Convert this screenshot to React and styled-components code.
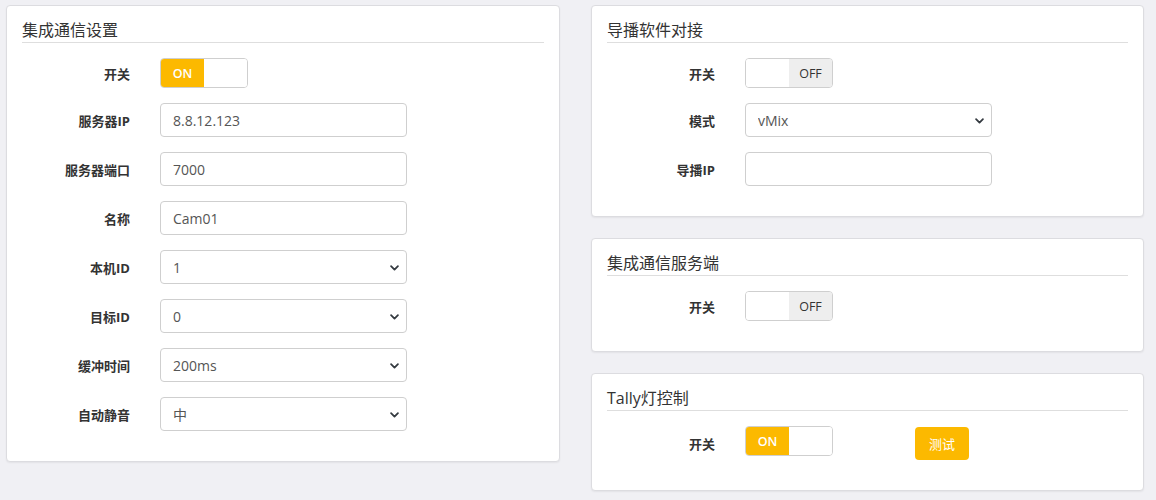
import styled, { createGlobalStyle } from "styled-components";

const GlobalStyle = createGlobalStyle`
  html, body {
    margin: 0;
    padding: 0;
    background: #f0f0f4;
    font-family: "Open Sans", "Noto Sans CJK SC", sans-serif;
    color: #333;
  }
  * { box-sizing: border-box; }
`;

const YELLOW = "#fcb900";

const chevron = `url("data:image/svg+xml,%3csvg xmlns='http://www.w3.org/2000/svg' viewBox='0 0 16 16'%3e%3cpath fill='none' stroke='%23343a40' stroke-linecap='round' stroke-linejoin='round' stroke-width='2.6' d='M3 6l5 5 5-5'/%3e%3c/svg%3e")`;

const Page = styled.div`
  display: grid;
  grid-template-columns: 554px 553px;
  column-gap: 31px;
  align-items: start;
  padding: 5px 6px;
  width: 1156px;
  height: 500px;
`;

const Column = styled.div`
  display: flex;
  flex-direction: column;
  gap: 21px;
`;

const Card = styled.section`
  background: #fff;
  border: 1px solid #dcdce0;
  border-radius: 4px;
  box-shadow: 0 1px 2px rgba(0, 0, 0, 0.06);
  padding: 13px 15px 30px;
`;

const Title = styled.h3`
  margin: 0 0 15px;
  font-size: 16px;
  font-weight: 400;
  line-height: 22px;
  padding-bottom: 1px;
  border-bottom: 1px solid #dedede;
  color: #333;
`;

const Rows = styled.div`
  display: flex;
  flex-direction: column;
  gap: 15px;
`;

const Row = styled.div`
  display: flex;
  align-items: ${(p) => (p.$top ? "flex-start" : "center")};
`;

const Label = styled.label`
  width: 108px;
  text-align: right;
  font-size: 13px;
  font-weight: 700;
  color: #333;
  margin-right: 30px;
  align-self: center;
`;

const TextInput = styled.input`
  width: 247px;
  height: 34px;
  border: 1px solid #cfcfcf;
  border-radius: 4px;
  padding: 0 12px;
  font-family: inherit;
  font-size: 14px;
  color: #555;
  outline: none;
`;

const Select = styled.select`
  width: 247px;
  height: 34px;
  border: 1px solid #cfcfcf;
  border-radius: 4px;
  padding: 0 12px;
  font-family: inherit;
  font-size: 14px;
  color: #555;
  background: #fff ${chevron} no-repeat right 6px center / 11px 11px;
  appearance: none;
  outline: none;
`;

const Switch = styled.div`
  display: flex;
  width: 88px;
  height: 30px;
  border: 1px solid #cfcfcf;
  border-radius: 4px;
  overflow: hidden;
`;

const Half = styled.span`
  flex: 1;
  display: flex;
  align-items: center;
  justify-content: center;
  font-size: 12.5px;
  background: ${(p) => (p.$on ? YELLOW : p.$off ? "#eeeeee" : "#fff")};
  color: ${(p) => (p.$on ? "#fff" : "#333")};
  font-weight: ${(p) => (p.$on ? 600 : 400)};
`;

const Button = styled.button`
  margin: 1px 0 0 82px;
  width: 54px;
  height: 33px;
  border: none;
  border-radius: 4px;
  background: ${YELLOW};
  color: #fff;
  font-family: inherit;
  font-size: 13px;
`;

const Toggle = ({ on }) =>
  on ? (
    <Switch>
      <Half $on>ON</Half>
      <Half />
    </Switch>
  ) : (
    <Switch>
      <Half />
      <Half $off>OFF</Half>
    </Switch>
  );

const Field = ({ label, top, children }) => (
  <Row $top={top}>
    <Label>{label}</Label>
    {children}
  </Row>
);

const App = () => (
  <>
    <GlobalStyle />
    <Page>
      <Column>
        <Card>
          <Title>集成通信设置</Title>
          <Rows>
            <Field label="开关">
              <Toggle on />
            </Field>
            <Field label="服务器IP">
              <TextInput defaultValue="8.8.12.123" />
            </Field>
            <Field label="服务器端口">
              <TextInput defaultValue="7000" />
            </Field>
            <Field label="名称">
              <TextInput defaultValue="Cam01" />
            </Field>
            <Field label="本机ID">
              <Select defaultValue="1">
                <option>1</option>
              </Select>
            </Field>
            <Field label="目标ID">
              <Select defaultValue="0">
                <option>0</option>
              </Select>
            </Field>
            <Field label="缓冲时间">
              <Select defaultValue="200ms">
                <option>200ms</option>
              </Select>
            </Field>
            <Field label="自动静音">
              <Select defaultValue="中">
                <option>中</option>
              </Select>
            </Field>
          </Rows>
        </Card>
      </Column>
      <Column>
        <Card>
          <Title>导播软件对接</Title>
          <Rows>
            <Field label="开关">
              <Toggle />
            </Field>
            <Field label="模式">
              <Select defaultValue="vMix">
                <option>vMix</option>
              </Select>
            </Field>
            <Field label="导播IP">
              <TextInput defaultValue="" />
            </Field>
          </Rows>
        </Card>
        <Card>
          <Title>集成通信服务端</Title>
          <Rows>
            <Field label="开关">
              <Toggle />
            </Field>
          </Rows>
        </Card>
        <Card>
          <Title>Tally灯控制</Title>
          <Rows>
            <Field label="开关" top>
              <Toggle on />
              <Button>测试</Button>
            </Field>
          </Rows>
        </Card>
      </Column>
    </Page>
  </>
);

export default App;
